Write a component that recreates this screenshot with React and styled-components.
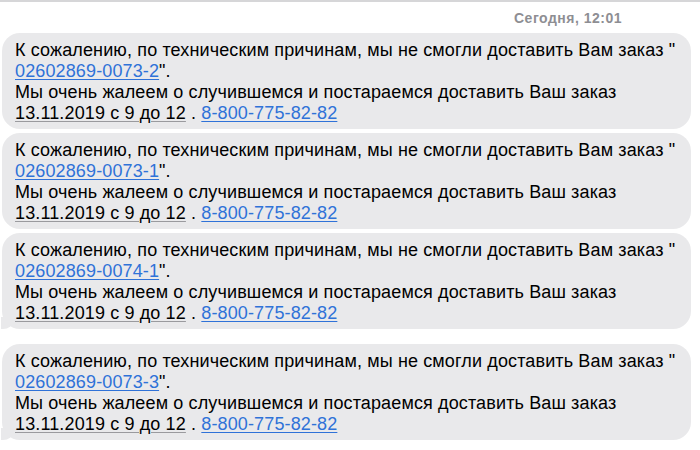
import React from "react";
import styled, { createGlobalStyle } from "styled-components";

const GlobalStyle = createGlobalStyle`
  html, body {
    margin: 0;
    padding: 0;
    background: #fff;
  }
  body {
    font-family: "Liberation Sans", Arial, sans-serif;
    -webkit-font-smoothing: antialiased;
  }
`;

const Screen = styled.div`
  width: 700px;
  height: 450px;
  overflow: hidden;
  border-top: 2px solid #d6d6d8;
  box-sizing: border-box;
`;

const Stamp = styled.div`
  height: 31px;
  display: flex;
  align-items: center;
  justify-content: flex-end;
  padding-right: 78px;
  font-size: 14px;
  font-weight: 700;
  color: #8e8e93;
  letter-spacing: 0.5px;
`;

const Thread = styled.div`
  display: flex;
  flex-direction: column;
  padding-left: 2px;
`;

const Bubble = styled.div`
  position: relative;
  width: 689px;
  box-sizing: border-box;
  margin-top: ${(p) => p.$gap || 0}px;
  padding: 7px 13px 5px 13px;
  background: #e9e9eb;
  border-radius: 18px;
  font-size: 18px;
  line-height: 21px;
  letter-spacing: 0.13px;
  color: #000;

  ${(p) =>
    p.$tail &&
    `
    &::before {
      content: "";
      position: absolute;
      left: -1px;
      bottom: 0;
      width: 12px;
      height: 12px;
      background: #e9e9eb;
      border-bottom-right-radius: 10px 8px;
    }
  `}
`;

const Line = styled.div`
  position: relative;
  white-space: nowrap;
`;

const Link = styled.span`
  color: #2f72d8;
  text-decoration: underline;
  text-decoration-thickness: 1px;
  text-underline-offset: 2px;
`;

const DateMark = styled.span`
  text-decoration: underline;
  text-decoration-color: #9a9a9e;
  text-decoration-thickness: 1px;
  text-underline-offset: 2px;
`;

const messages = [
  { order: "02602869-0073-2", gap: 0 },
  { order: "02602869-0073-1", gap: 4 },
  { order: "02602869-0074-1", gap: 4, tail: true },
  { order: "02602869-0073-3", gap: 15, tail: true },
];

const Message = ({ order, gap, tail }) => (
  <Bubble $gap={gap} $tail={tail}>
    <Line>
      К сожалению, по техническим причинам, мы не смогли доставить Вам заказ "
    </Line>
    <Line>
      <Link>{order}</Link>".
    </Line>
    <Line>Мы очень жалеем о случившемся и постараемся доставить Ваш заказ</Line>
    <Line>
      <DateMark>13.11.2019 с 9 до 12</DateMark> . <Link>8-800-775-82-82</Link>
    </Line>
  </Bubble>
);

export default function App() {
  return (
    <Screen>
      <GlobalStyle />
      <Stamp>Сегодня, 12:01</Stamp>
      <Thread>
        {messages.map((m) => (
          <Message key={m.order} {...m} />
        ))}
      </Thread>
    </Screen>
  );
}
